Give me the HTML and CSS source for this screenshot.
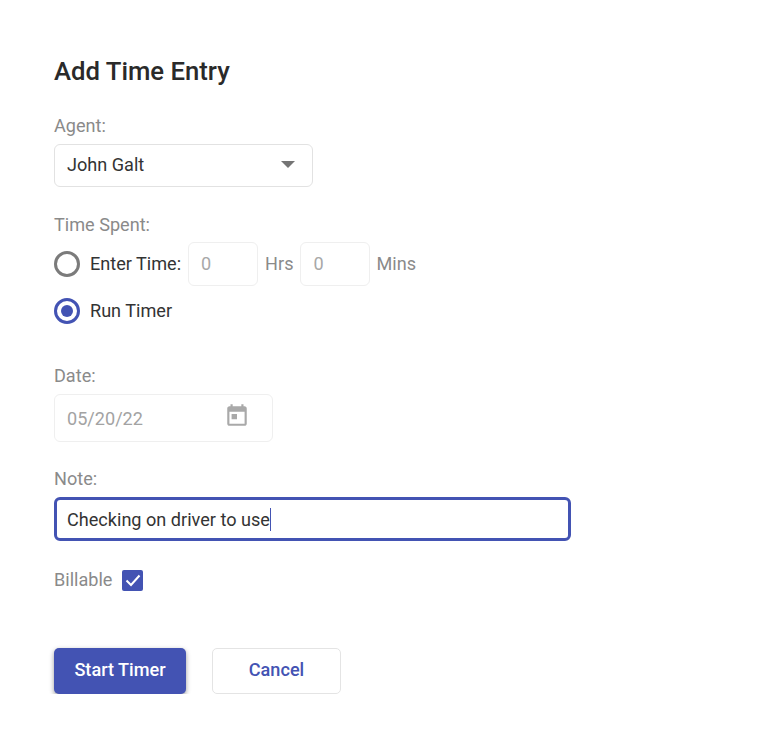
FILE: index.html
```html
<!DOCTYPE html>
<html lang="en">
<head>
    <meta charset="UTF-8">
    <meta name="viewport" content="width=device-width, initial-scale=1.0">
    <title>Add Time Entry</title>
    <link rel="stylesheet" href="styles.css">
</head>
<body>
    <div class="entry-form">
        <h2 class="form-title">Add Time Entry</h2>

        <div class="field-label agent-label">Agent:</div>
        <div class="select-box">
            <span class="select-value">John Galt</span>
            <span class="select-arrow"></span>
        </div>

        <div class="field-label time-label">Time Spent:</div>
        <div class="radio-row enter-row">
            <span class="radio"></span>
            <span class="radio-text">Enter Time:</span>
            <div class="small-input">0</div>
            <span class="unit">Hrs</span>
            <div class="small-input">0</div>
            <span class="unit">Mins</span>
        </div>
        <div class="radio-row timer-row">
            <span class="radio checked"></span>
            <span class="radio-text">Run Timer</span>
        </div>

        <div class="field-label date-label">Date:</div>
        <div class="date-input">
            <span>05/20/22</span>
            <svg class="calendar-icon" viewBox="0 0 24 24" width="26" height="26">
                <path d="M19 4h-1V2h-2v2H8V2H6v2H5c-1.1 0-2 .9-2 2v14c0 1.1.9 2 2 2h14c1.100 0 2-.9 2-2V6c0-1.100-.9-2-2-2zm0 16H5V9h14v11zM7 11h5v5H7z"/>
            </svg>
        </div>

        <div class="field-label note-label">Note:</div>
        <div class="note-input">Checking on driver to use<span class="caret"></span></div>

        <div class="billable-row">
            <span class="field-label">Billable</span>
            <span class="checkbox">
                <svg viewBox="0 0 20 20" width="20" height="20">
                    <path d="M3.500 10.500l4.500 4.500 8.500-9.500" fill="none" stroke="#fff" stroke-width="2"/>
                </svg>
            </span>
        </div>

        <div class="button-row">
            <button class="btn btn-primary">Start Timer</button>
            <button class="btn btn-cancel">Cancel</button>
        </div>
    </div>
</body>
</html>
```

FILE: styles.css
```css
body {
    margin: 0;
    background-color: #fff;
    font-family: Roboto, Arial, sans-serif;
    font-size: 18.1px;
    color: #333;
}

.entry-form {
    padding: 56px 0 0 54px;
}

.form-title {
    margin: 0;
    font-size: 25.7px;
    line-height: 30px;
    font-weight: 500;
    color: #2a2a2a;
}

.field-label {
    color: #8a8a8a;
    line-height: 22px;
}

.agent-label {
    margin-top: 29px;
}

.select-box {
    box-sizing: border-box;
    width: 259px;
    height: 43px;
    margin-top: 7px;
    padding: 0 17px 0 12px;
    display: flex;
    align-items: center;
    justify-content: space-between;
    border: 1.5px solid #e2e2e2;
    border-radius: 6px;
}

.select-value {
    margin-bottom: 2px;
}

.select-arrow {
    width: 0;
    height: 0;
    border-left: 7px solid transparent;
    border-right: 7px solid transparent;
    border-top: 7px solid #757575;
    margin-bottom: 2px;
}

.time-label {
    margin-top: 27px;
}

.radio-row {
    display: flex;
    align-items: center;
}

.enter-row {
    height: 44px;
    margin-top: 6px;
}

.timer-row {
    height: 28px;
    margin-top: 11px;
}

.radio {
    box-sizing: border-box;
    width: 26px;
    height: 26px;
    border: 3px solid #7b7b7b;
    border-radius: 50%;
    margin-right: 10px;
    position: relative;
}

.radio.checked {
    border-color: #4353b3;
}

.radio.checked::after {
    content: "";
    position: absolute;
    top: 4px;
    left: 4px;
    width: 12px;
    height: 12px;
    border-radius: 50%;
    background-color: #4353b3;
}

.radio-text {
    margin-bottom: 2px;
}

.small-input {
    box-sizing: border-box;
    width: 70px;
    height: 44px;
    margin-left: 7px;
    padding: 0 0 2px 12px;
    display: flex;
    align-items: center;
    border: 1.5px solid #efefef;
    border-radius: 6px;
    color: #a8a8a8;
}

.unit {
    margin: 0 0 2px 7px;
    color: #8a8a8a;
}

.unit + .small-input {
    margin-left: 6px;
    padding-left: 13px;
}

.date-label {
    margin-top: 40px;
}

.date-input {
    box-sizing: border-box;
    width: 219px;
    height: 48px;
    margin-top: 7px;
    padding: 0 22px 0 12px;
    display: flex;
    align-items: center;
    justify-content: space-between;
    border: 1.5px solid #efefef;
    border-radius: 6px;
    color: #a3a3a3;
}

.calendar-icon {
    fill: #a9a9a9;
    margin-top: -6px;
}

.note-label {
    margin-top: 26px;
}

.note-input {
    box-sizing: border-box;
    width: 517px;
    height: 44px;
    margin-top: 7px;
    padding-left: 10px;
    display: flex;
    align-items: center;
    border: 3px solid #4353b3;
    border-radius: 6px;
}

.caret {
    width: 1px;
    height: 23px;
    background-color: #4353b3;
}

.billable-row {
    display: flex;
    align-items: center;
    margin-top: 28px;
}

.checkbox {
    width: 21px;
    height: 21px;
    margin-left: 10px;
    display: flex;
    align-items: center;
    justify-content: center;
    background-color: #4353b3;
    border-radius: 2px;
}

.button-row {
    display: flex;
    gap: 26px;
    margin-top: 57px;
}

.btn {
    height: 46px;
    padding: 0 0 3px;
    font-family: inherit;
    font-size: 18.1px;
    font-weight: 500;
    border-radius: 5px;
}

.btn-primary {
    width: 132px;
    background-color: #4353b3;
    color: #fff;
    border: none;
    box-shadow: 0 2px 5px rgba(0, 0, 0, 0.4);
}

.btn-cancel {
    width: 129px;
    background-color: #fff;
    color: #4353b3;
    border: 1.5px solid #e4e4e4;
}
```
